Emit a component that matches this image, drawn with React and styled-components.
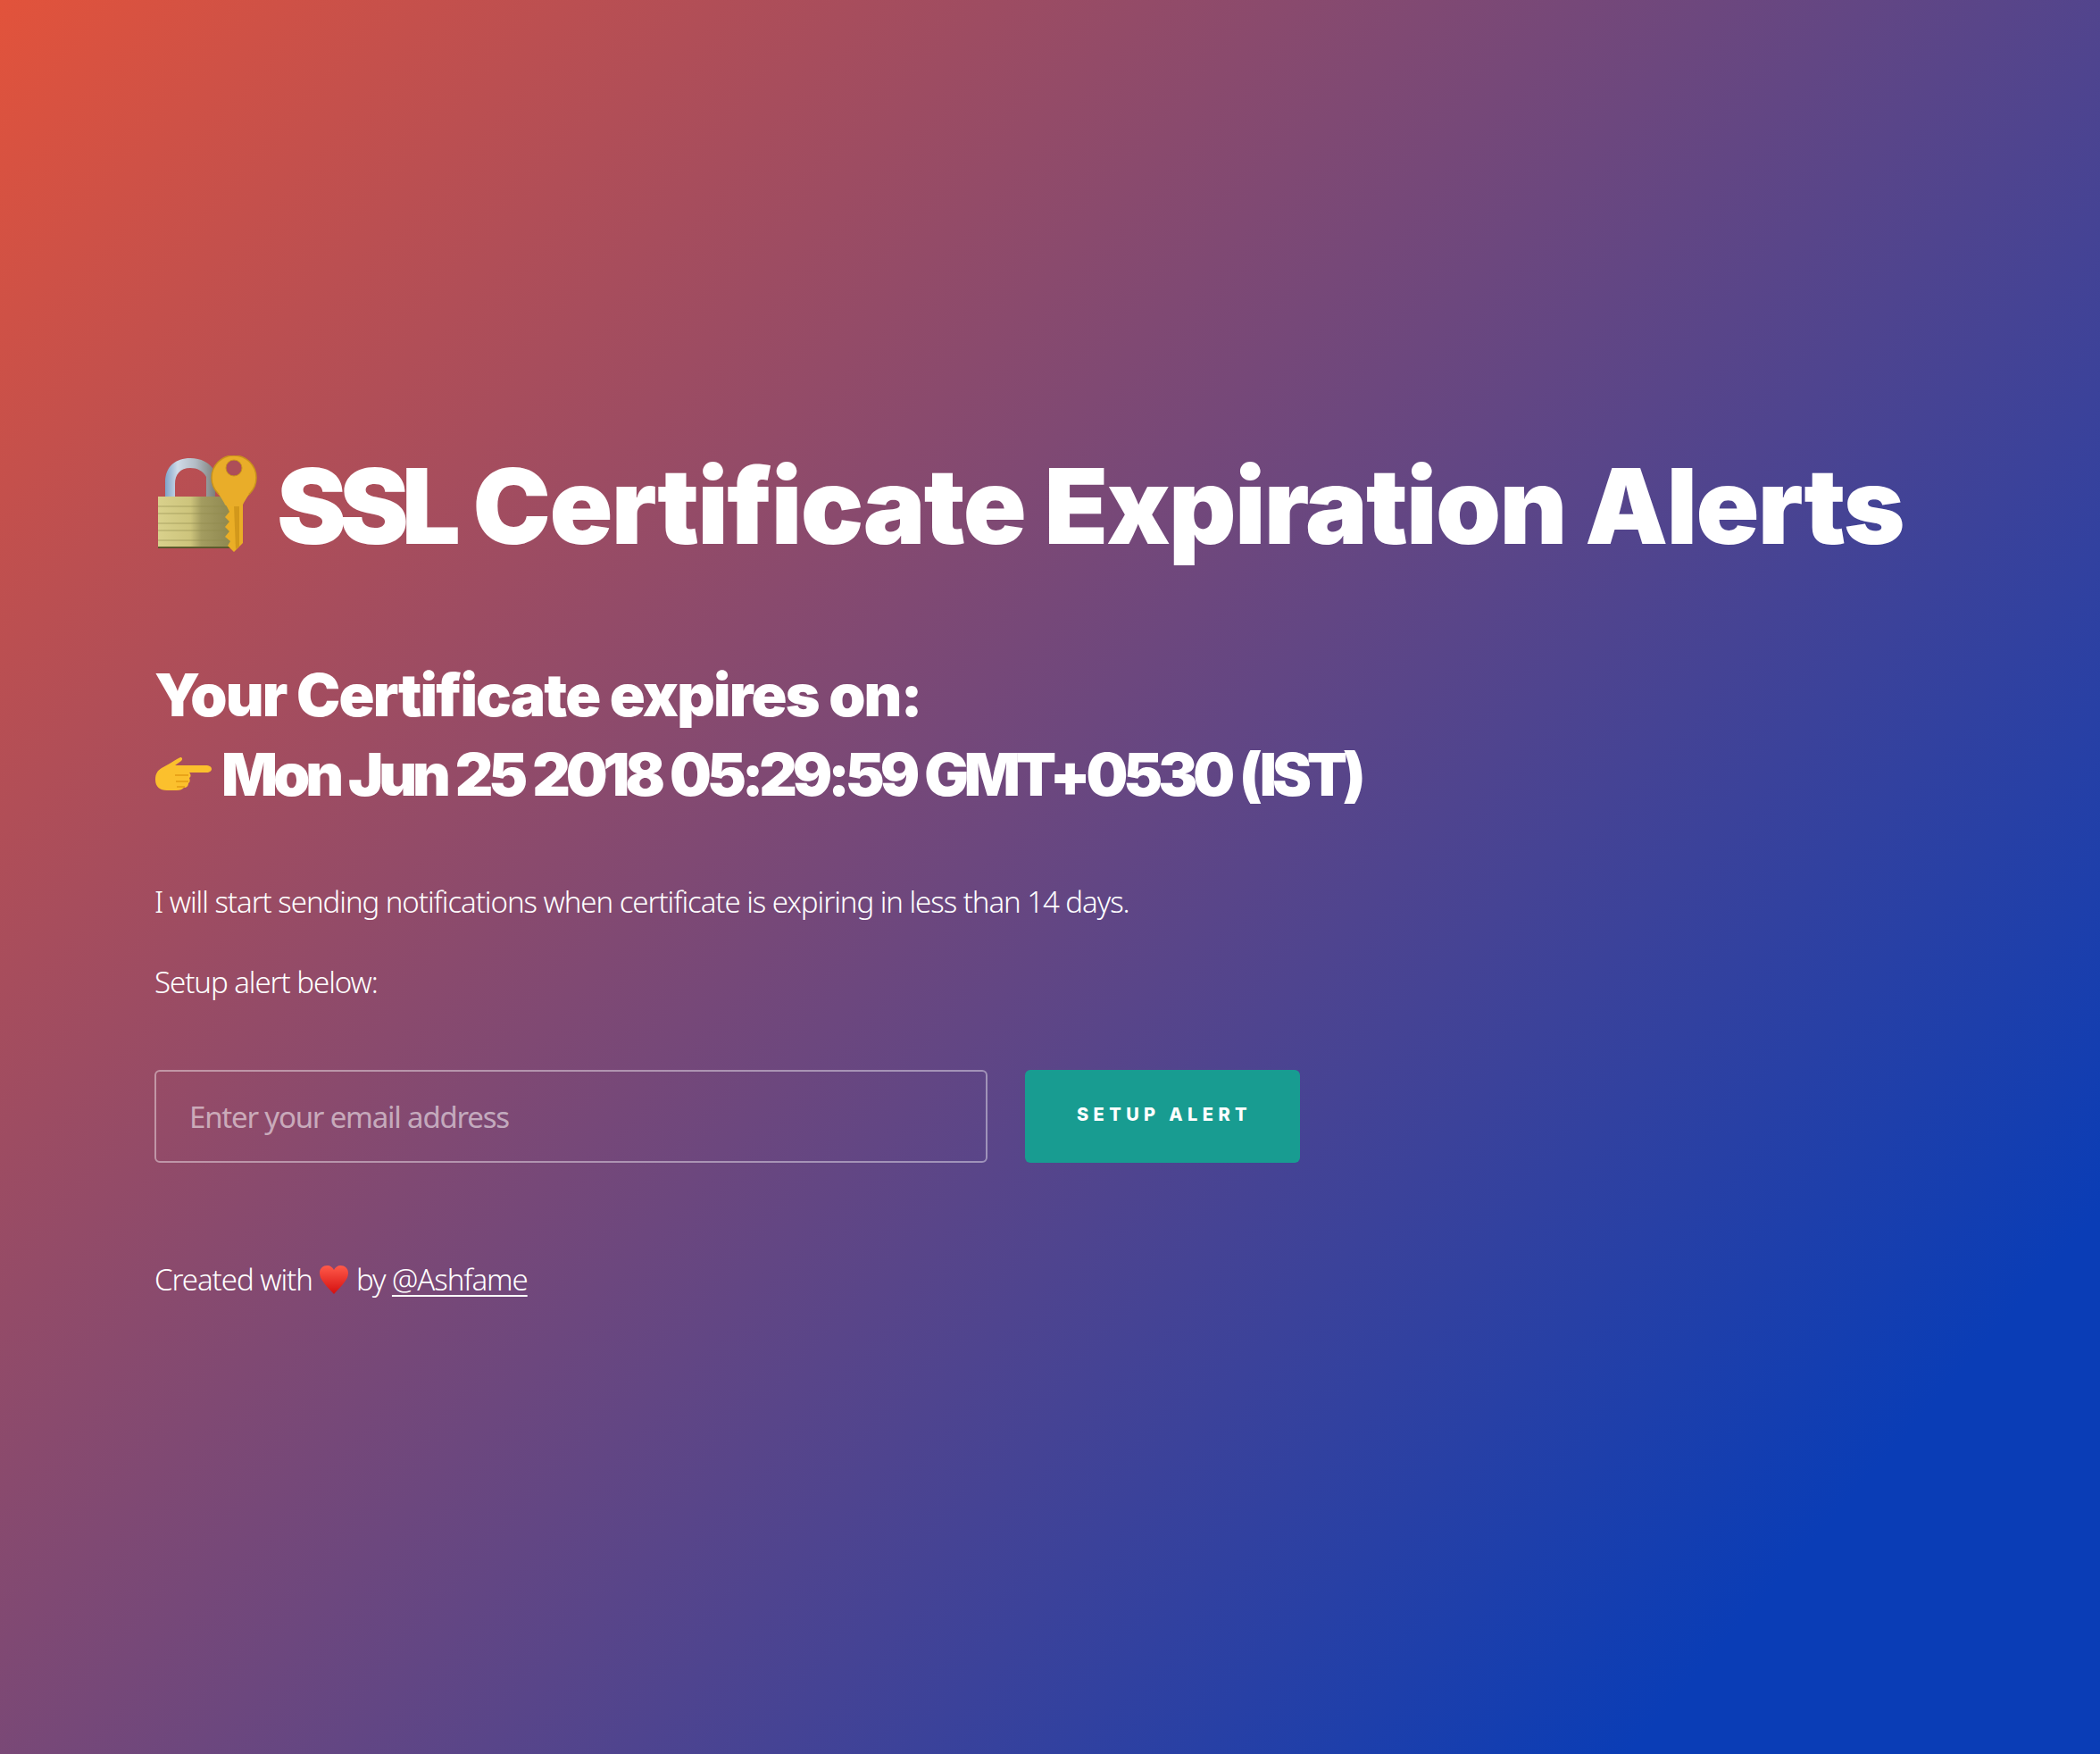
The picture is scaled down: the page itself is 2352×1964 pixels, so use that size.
import React from "react";
import styled, { createGlobalStyle } from "styled-components";

const GlobalStyle = createGlobalStyle`
  html, body {
    margin: 0;
    padding: 0;
  }
  body {
    font-family: "Noto Sans", "Open Sans", sans-serif;
    color: #fff;
  }
`;

const Page = styled.div`
  width: 2352px;
  height: 1964px;
  box-sizing: border-box;
  padding: 490px 0 0 173px;
  background: linear-gradient(131deg, #e2533b 0%, #0a3db6 87%, #0a3db6 100%);
  overflow: hidden;
`;

const Title = styled.h1`
  margin: 0;
  display: flex;
  align-items: center;
  gap: 21px;
  height: 152px;
  font-family: Inter, sans-serif;
  font-size: 117px;
  font-weight: 900;
  letter-spacing: -1.7px;
  white-space: pre;
`;

const Acronym = styled.span`
  letter-spacing: -8px;
`;

const Expiry = styled.h2`
  margin: 92px 0 0;
  font-family: Inter, sans-serif;
  font-size: 66px;
  line-height: 89px;
  font-weight: 900;
  white-space: nowrap;
`;

const ExpiryLine = styled.span`
  display: flex;
  align-items: center;
  gap: 11px;
  letter-spacing: ${(p) => p.$spacing}px;
  word-spacing: ${(p) => p.$wordGap || 0}px;
`;

const Note = styled.p`
  margin: ${(p) => p.$top}px 0 0;
  font-family: "Noto Sans", sans-serif;
  font-size: 33px;
  line-height: 46px;
  font-weight: 300;
  letter-spacing: -1.05px;
  white-space: nowrap;
`;

const AlertForm = styled.form`
  display: flex;
  gap: 42px;
  margin-top: 75px;
`;

const EmailInput = styled.input`
  width: 933px;
  height: 104px;
  box-sizing: border-box;
  padding: 0 37px;
  border: 2px solid rgba(255, 255, 255, 0.42);
  border-radius: 6px;
  background: transparent;
  color: #fff;
  font-family: "Noto Sans", sans-serif;
  font-size: 33px;
  letter-spacing: -1.2px;
  outline: none;
  &::placeholder {
    color: rgba(255, 255, 255, 0.55);
    opacity: 1;
  }
`;

const SetupButton = styled.button`
  width: 308px;
  height: 104px;
  padding: 0 0 4px 4px;
  border: 0;
  border-radius: 6px;
  background: #189c91;
  color: #fff;
  font-family: Inter, sans-serif;
  font-size: 20px;
  font-weight: 800;
  letter-spacing: 5.4px;
  white-space: nowrap;
`;

const Credit = styled.p`
  display: flex;
  align-items: center;
  margin: 108px 0 0;
  font-size: 33px;
  line-height: 46px;
  font-weight: 300;
  letter-spacing: -1.05px;
  white-space: pre;
`;

const AuthorLink = styled.a`
  color: #fff;
  text-decoration: underline;
  text-underline-offset: 5px;
  text-decoration-thickness: 2px;
`;

const LockKeyIcon = () => (
  <svg width="116" height="112" viewBox="0 0 116 112" aria-hidden="true">
    <defs>
      <linearGradient id="shackle" x1="0" x2="1" y1="0" y2="0">
        <stop offset="0" stopColor="#7fa3c8" />
        <stop offset="0.25" stopColor="#cfdbe8" />
        <stop offset="0.6" stopColor="#b3bdc6" />
        <stop offset="1" stopColor="#7d7f7a" />
      </linearGradient>
      <linearGradient id="body" x1="0" x2="1" y1="0" y2="0">
        <stop offset="0" stopColor="#d9d18c" />
        <stop offset="0.45" stopColor="#cdc47c" />
        <stop offset="0.6" stopColor="#a39c60" />
        <stop offset="1" stopColor="#8f8850" />
      </linearGradient>
    </defs>
    <path d="M12 47V30C12 12 24 3 40 3c12 0 22 5 28 15v29H58V24c-4-7-10-10-18-10-11 0-17 7-17 18v15z" fill="url(#shackle)" />
    <path d="M4 46h81v58H4z" fill="url(#body)" />
    <path d="M4 57h81M4 65h81M4 76h81M4 84h81M4 95h81" stroke="#8f8a4c" strokeWidth="1.2" opacity="0.6" />
    <path d="M4 102h81v2H4z" fill="#5d5a2d" />
    <path d="M80 55h19l0 43-10 10-7-7 3-5-6-5 5-6-5-5 5-6-5-5 5-6z" fill="#eaae26" />
    <path d="M89 56h6v46l-4 3z" fill="#c88f17" opacity="0.7" />
    <circle cx="89" cy="25" r="25" fill="#e9ad29" stroke="#c9921b" strokeWidth="1.5" />
    <path d="M72 43h34l-6 10c-1 3-3 4-7 4H84c-3 0-5-1-6-4z" fill="#e9ad29" />
    <circle cx="89" cy="14" r="9" fill="#ad4e58" stroke="#c9921b" />
  </svg>
);

const PointingHandIcon = () => (
  <svg width="64" height="42" viewBox="0 0 64 42" aria-hidden="true">
    <path d="M1 26c0-6 2-10 7-13l9-5c4-2 7-5 12-7 2 0 3 2 1 4l-7 5 34 0c5 0 7 2 7 4s-2 4-6 4H39c2 2 2 5 0 6 1 2 1 5-1 6 0 3-2 5-5 5-2 2-4 3-8 3H14C6 38 1 34 1 26z" fill="#fbc02d" />
    <path d="M23 21h15M24 28h14M25 34h9" stroke="#e39a12" strokeWidth="1.5" fill="none" />
  </svg>
);

const HeartIcon = () => (
  <svg width="34" height="34" viewBox="0 0 34 34" aria-hidden="true">
    <defs>
      <linearGradient id="heart" x1="0" x2="0" y1="0" y2="1">
        <stop offset="0" stopColor="#ff5a4a" />
        <stop offset="1" stopColor="#d40f0f" />
      </linearGradient>
    </defs>
    <path d="M17 33C8 23 1 17 1 9.500 1 4 5 1 9.500 1 13 1 15.500 3 17 6c1.500-3 4-5 7.500-5C29 1 33 4 33 9.500 33 17 26 23 17 33z" fill="url(#heart)" />
  </svg>
);

const App = () => (
  <>
    <GlobalStyle />
    <Page>
      <Title>
        <LockKeyIcon />
        <span>
          <Acronym>SSL</Acronym> Certificate Expiration Alerts
        </span>
      </Title>
      <Expiry>
        <ExpiryLine $spacing={-1.8}>Your Certificate expires on:</ExpiryLine>
        <ExpiryLine $spacing={-5.1} $wordGap={2}>
          <PointingHandIcon />
          Mon Jun 25 2018 05:29:59 GMT+0530 (IST)
        </ExpiryLine>
      </Expiry>
      <Note $top={75}>
        I will start sending notifications when certificate is expiring in less than 14 days.
      </Note>
      <Note $top={44}>Setup alert below:</Note>
      <AlertForm onSubmit={(e) => e.preventDefault()}>
        <EmailInput type="email" placeholder="Enter your email address" />
        <SetupButton type="submit">SETUP ALERT</SetupButton>
      </AlertForm>
      <Credit>
        Created with <HeartIcon /> by <AuthorLink href="#">@Ashfame</AuthorLink>
      </Credit>
    </Page>
  </>
);

export default App;
